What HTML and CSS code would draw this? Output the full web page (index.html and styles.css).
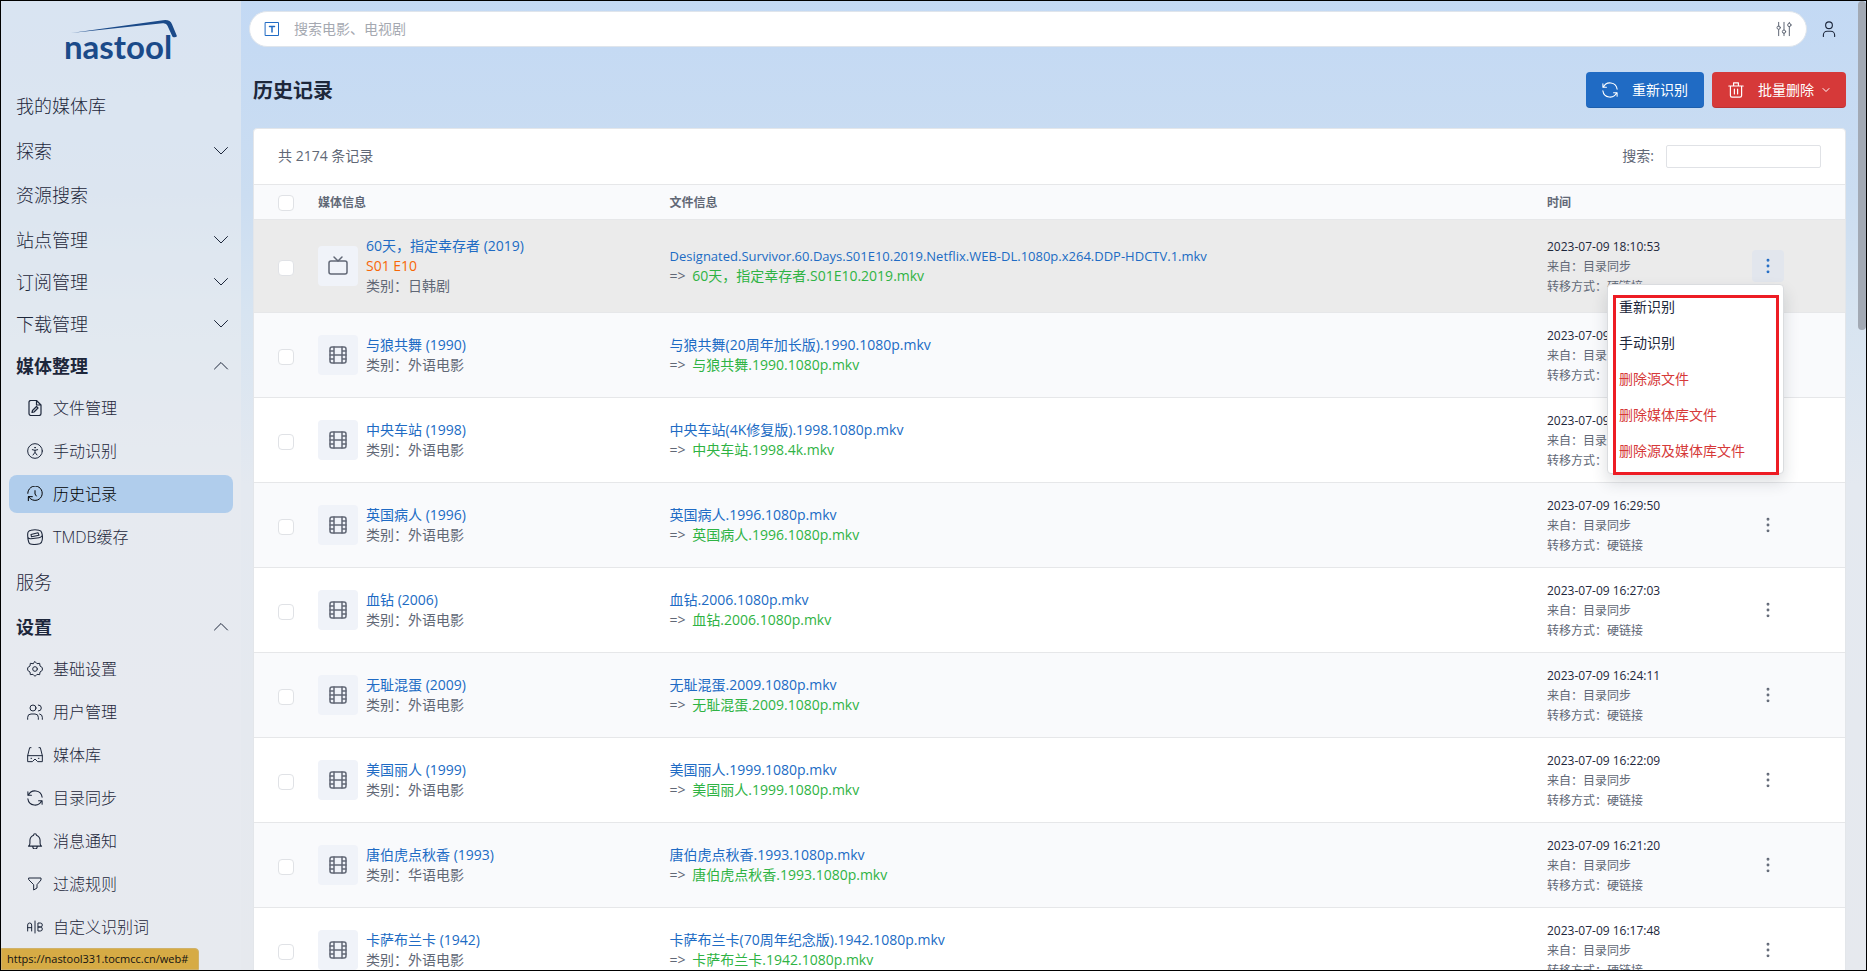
FILE: index.html
```html
<!DOCTYPE html>
<html lang="zh-CN">
<head>
<meta charset="utf-8">
<title>历史记录 - nastool</title>
<link rel="stylesheet" href="styles.css">
</head>
<body>
<svg class="defs" aria-hidden="true">
  <symbol id="down" viewBox="0 0 16 16"><path d="M1.5 4.5 8 11l6.500-6.500" stroke-width="1"/></symbol>
  <symbol id="up" viewBox="0 0 16 16"><path d="M1.500 11 8 4.500 14.500 11" stroke-width="1"/></symbol>
  <symbol id="film" viewBox="0 0 24 24"><rect x="4" y="4" width="16" height="16" rx="2"/><path d="M8 4v16M16 4v16M4 8h4M4 16h4M4 12h16M16 8h4M16 16h4"/></symbol>
  <symbol id="tv" viewBox="0 0 24 24"><rect x="3" y="7" width="18" height="13" rx="2"/><path d="m16 3-4 4-4-4"/></symbol>
  <symbol id="dots" viewBox="0 0 24 24"><circle cx="12" cy="12" r="1"/><circle cx="12" cy="19" r="1"/><circle cx="12" cy="5" r="1"/></symbol>
  <symbol id="refresh" viewBox="3 3 18 18"><path d="M20 11A8.100 8.100 0 0 0 4.500 9M4 5v4h4M4 13a8.100 8.100 0 0 0 15.500 2m.5 4v-4h-4" stroke-width="1.200"/></symbol>
</svg>
<div class="app">
  <aside class="sidebar">
    <a class="logo" href="#" aria-label="nastool">
      <svg viewBox="0 0 120 54" width="120" height="54"><path d="M6 15 98 2.200q7-1 9 4l5 12q-2 2-4.500.5l-5-11q-1-3-5-2.500Z" fill="#1b4a89"/><text x="-1" y="41">nastool</text></svg>
    </a>
    <nav>
      <a class="top" href="#">我的媒体库</a>
      <button class="group">探索<svg><use href="#down"/></svg></button>
      <a class="top" href="#">资源搜索</a>
      <button class="group">站点管理<svg><use href="#down"/></svg></button>
      <button class="group">订阅管理<svg><use href="#down"/></svg></button>
      <button class="group">下载管理<svg><use href="#down"/></svg></button>
      <button class="group open">媒体整理<svg><use href="#up"/></svg></button>
      <a class="sub" href="#"><svg viewBox="0 0 16 16"><path d="M9.500 1v4H14M14 5v8.500a2 2 0 0 1-2 2H4a2 2 0 0 1-2-2v-11a1.800 1.800 0 0 1 2-2h5.500ZM5 12.500l.5-2 4-4 1.500 1.500-4 4Z" stroke-width="1.200"/></svg>文件管理</a>
      <a class="sub" href="#"><svg viewBox="0 0 24 24"><circle cx="12" cy="12" r="11"/><path d="m8 10 4 1 4-1M12 11v3m-3 4 3-4 3 4"/><circle cx="12" cy="7" r=".6"/></svg>手动识别</a>
      <a class="sub active" href="#"><svg viewBox="0 0 24 24"><path d="M12 7v5l2 3M2.500 16A10.800 10.800 0 1 0 1.200 11M2 22v-6h6"/></svg>历史记录</a>
      <a class="sub" href="#"><svg viewBox="0 0 16 16"><path d="M.7 5.500Q.5 2 4 1.300q4-1 8 0 2.500.5 2.700 2.500 1.200 3 .5 7.200-.3 3-2.500 3.800-4 1-8 .5Q2 15 1.700 13 .5 9 .7 5.500ZM1 8.500q1 1.500 3 1.300l8-1q2-.2 3-2M4 5.500l7-1.700 1 2.500-7.500 1.500Z" stroke-width="1.100"/></svg>TMDB缓存</a>
      <a class="top" href="#">服务</a>
      <button class="group open">设置<svg><use href="#up"/></svg></button>
      <a class="sub" href="#"><svg viewBox="0 0 24 24"><path d="m12 1 3 3 4-.5.5 4L23 10v4l-3.500 2.500-.5 4-4-.5-3 3-3-3-4 .5-.5-4L1 14v-4l3.500-2.500.5-4 4 .5Z"/><circle cx="12" cy="12" r="3.500"/></svg>基础设置</a>
      <a class="sub" href="#"><svg viewBox="0 0 24 24"><circle cx="9" cy="6" r="4.500"/><path d="M1 23v-3a5 5 0 0 1 5-5h6a5 5 0 0 1 5 5v3M17 1.500a4.500 4.500 0 0 1 0 9M23 23v-3a5 5 0 0 0-4-5"/></svg>用户管理</a>
      <a class="sub" href="#"><svg viewBox="0 0 24 24"><path d="M6 1H4L1 13v9h7l4-4 4 4h7v-9L20 1h-2M1 13h22M6 17h1M17 17h1"/></svg>媒体库</a>
      <a class="sub" href="#"><svg><use href="#refresh"/></svg>目录同步</a>
      <a class="sub" href="#"><svg viewBox="2 1 20 22"><path d="M10 4a2 2 0 1 1 4 0 8 8 0 0 1 5 7v4a5 5 0 0 0 2 4H3a5 5 0 0 0 2-4v-4a8 8 0 0 1 5-7M9 19v1a3 3 0 0 0 6 0v-1"/></svg>消息通知</a>
      <a class="sub" href="#"><svg viewBox="0 0 24 24"><path d="M3 3h18v3l-6 7v5l-5 3v-8L3 6Z"/></svg>过滤规则</a>
      <a class="sub" href="#"><svg viewBox="0 0 24 24"><path d="M1 18V9q0-3 3-3t3 3v9M1 13h6M12 3v18M17 6h3q3 0 3 3t-3 3h-3zm0 6h3q3 0 3 3t-3 3h-3Z"/></svg>自定义识别词</a>
    </nav>
  </aside>
  <main class="main">
    <header class="bar">
      <div class="search">
        <svg class="type" viewBox="0 0 16 16"><rect x="1.500" y="1.500" width="13" height="13"/><path d="M5.500 5.500h5M8 5.500V11" stroke-width="1.500"/></svg>
        <input type="text" placeholder="搜索电影、电视剧" aria-label="搜索电影、电视剧">
        <button class="plain" aria-label="高级"><svg viewBox="0 0 24 24"><path d="M4 2v6M4 13v9M12 2v11M12 18v4M20 2v1M20 8v14"/><circle cx="4" cy="10" r="2.500"/><circle cx="12" cy="16" r="2.500"/><circle cx="20" cy="6" r="2.500"/></svg></button>
      </div>
      <button class="plain user" aria-label="用户"><svg viewBox="0 0 24 24"><circle cx="12" cy="7" r="4.500"/><path d="M4.500 22v-2a5 5 0 0 1 5-5h5a5 5 0 0 1 5 5v2"/></svg></button>
    </header>
    <div class="heading">
      <h1>历史记录</h1>
      <button class="btn blue"><svg><use href="#refresh"/></svg>重新识别</button>
      <button class="btn red"><svg viewBox="2 2 20 20"><path d="M3 7h18M10 11v6M14 11v6M5 7v12a2 2 0 0 0 2 2h10a2 2 0 0 0 2-2V7M9 7V3h6v4"/></svg>批量删除<svg class="caret" viewBox="0 0 8 8"><path d="M1 2.500 4 5.500l3-3"/></svg></button>
    </div>
    <section class="card">
      <div class="tools"><span>共 2174 条记录</span><label for="q">搜索:</label><input id="q" type="text"></div>
      <table>
        <colgroup><col class="c-check"><col class="c-media"><col><col class="c-time"><col class="c-act"></colgroup>
        <thead><tr><th><input type="checkbox" aria-label="全选"></th><th>媒体信息</th><th>文件信息</th><th>时间</th><th></th></tr></thead>
        <tbody>
          <tr class="hover">
            <td><input type="checkbox" aria-label="选择"></td>
            <td><div class="media"><span class="thumb"><svg><use href="#tv"/></svg></span><div><a href="#">60天，指定幸存者 (2019)</a><div class="ep">S01 E10</div><div>类别：日韩剧</div></div></div></td>
            <td><a class="long" href="#">Designated.Survivor.60.Days.S01E10.2019.Netflix.WEB-DL.1080p.x264.DDP-HDCTV.1.mkv</a><div>=&gt; <span class="dest">60天，指定幸存者.S01E10.2019.mkv</span></div></td>
            <td class="time"><time>2023-07-09 18:10:53</time><div>来自：目录同步</div><div>转移方式：硬链接</div></td>
            <td><div class="action"><button class="more on" aria-label="操作"><svg><use href="#dots"/></svg></button>
              <div class="menu"><button>重新识别</button><button>手动识别</button><button class="danger">删除源文件</button><button class="danger">删除媒体库文件</button><button class="danger">删除源及媒体库文件</button><span class="mark"></span></div></div></td>
          </tr>
          <tr>
            <td><input type="checkbox" aria-label="选择"></td>
            <td><div class="media"><span class="thumb"><svg><use href="#film"/></svg></span><div><a href="#">与狼共舞 (1990)</a><div>类别：外语电影</div></div></div></td>
            <td><a href="#">与狼共舞(20周年加长版).1990.1080p.mkv</a><div>=&gt; <span class="dest">与狼共舞.1990.1080p.mkv</span></div></td>
            <td class="time"><time>2023-07-09</time><div>来自：目录同步</div><div>转移方式：</div></td>
            <td><div class="action"><button class="more" aria-label="操作"><svg><use href="#dots"/></svg></button></div></td>
          </tr>
          <tr>
            <td><input type="checkbox" aria-label="选择"></td>
            <td><div class="media"><span class="thumb"><svg><use href="#film"/></svg></span><div><a href="#">中央车站 (1998)</a><div>类别：外语电影</div></div></div></td>
            <td><a href="#">中央车站(4K修复版).1998.1080p.mkv</a><div>=&gt; <span class="dest">中央车站.1998.4k.mkv</span></div></td>
            <td class="time"><time>2023-07-09</time><div>来自：目录同步</div><div>转移方式：</div></td>
            <td><div class="action"><button class="more" aria-label="操作"><svg><use href="#dots"/></svg></button></div></td>
          </tr>
          <tr>
            <td><input type="checkbox" aria-label="选择"></td>
            <td><div class="media"><span class="thumb"><svg><use href="#film"/></svg></span><div><a href="#">英国病人 (1996)</a><div>类别：外语电影</div></div></div></td>
            <td><a href="#">英国病人.1996.1080p.mkv</a><div>=&gt; <span class="dest">英国病人.1996.1080p.mkv</span></div></td>
            <td class="time"><time>2023-07-09 16:29:50</time><div>来自：目录同步</div><div>转移方式：硬链接</div></td>
            <td><div class="action"><button class="more" aria-label="操作"><svg><use href="#dots"/></svg></button></div></td>
          </tr>
          <tr>
            <td><input type="checkbox" aria-label="选择"></td>
            <td><div class="media"><span class="thumb"><svg><use href="#film"/></svg></span><div><a href="#">血钻 (2006)</a><div>类别：外语电影</div></div></div></td>
            <td><a href="#">血钻.2006.1080p.mkv</a><div>=&gt; <span class="dest">血钻.2006.1080p.mkv</span></div></td>
            <td class="time"><time>2023-07-09 16:27:03</time><div>来自：目录同步</div><div>转移方式：硬链接</div></td>
            <td><div class="action"><button class="more" aria-label="操作"><svg><use href="#dots"/></svg></button></div></td>
          </tr>
          <tr>
            <td><input type="checkbox" aria-label="选择"></td>
            <td><div class="media"><span class="thumb"><svg><use href="#film"/></svg></span><div><a href="#">无耻混蛋 (2009)</a><div>类别：外语电影</div></div></div></td>
            <td><a href="#">无耻混蛋.2009.1080p.mkv</a><div>=&gt; <span class="dest">无耻混蛋.2009.1080p.mkv</span></div></td>
            <td class="time"><time>2023-07-09 16:24:11</time><div>来自：目录同步</div><div>转移方式：硬链接</div></td>
            <td><div class="action"><button class="more" aria-label="操作"><svg><use href="#dots"/></svg></button></div></td>
          </tr>
          <tr>
            <td><input type="checkbox" aria-label="选择"></td>
            <td><div class="media"><span class="thumb"><svg><use href="#film"/></svg></span><div><a href="#">美国丽人 (1999)</a><div>类别：外语电影</div></div></div></td>
            <td><a href="#">美国丽人.1999.1080p.mkv</a><div>=&gt; <span class="dest">美国丽人.1999.1080p.mkv</span></div></td>
            <td class="time"><time>2023-07-09 16:22:09</time><div>来自：目录同步</div><div>转移方式：硬链接</div></td>
            <td><div class="action"><button class="more" aria-label="操作"><svg><use href="#dots"/></svg></button></div></td>
          </tr>
          <tr>
            <td><input type="checkbox" aria-label="选择"></td>
            <td><div class="media"><span class="thumb"><svg><use href="#film"/></svg></span><div><a href="#">唐伯虎点秋香 (1993)</a><div>类别：华语电影</div></div></div></td>
            <td><a href="#">唐伯虎点秋香.1993.1080p.mkv</a><div>=&gt; <span class="dest">唐伯虎点秋香.1993.1080p.mkv</span></div></td>
            <td class="time"><time>2023-07-09 16:21:20</time><div>来自：目录同步</div><div>转移方式：硬链接</div></td>
            <td><div class="action"><button class="more" aria-label="操作"><svg><use href="#dots"/></svg></button></div></td>
          </tr>
          <tr>
            <td><input type="checkbox" aria-label="选择"></td>
            <td><div class="media"><span class="thumb"><svg><use href="#film"/></svg></span><div><a href="#">卡萨布兰卡 (1942)</a><div>类别：外语电影</div></div></div></td>
            <td><a href="#">卡萨布兰卡(70周年纪念版).1942.1080p.mkv</a><div>=&gt; <span class="dest">卡萨布兰卡.1942.1080p.mkv</span></div></td>
            <td class="time"><time>2023-07-09 16:17:48</time><div>来自：目录同步</div><div>转移方式：硬链接</div></td>
            <td><div class="action"><button class="more" aria-label="操作"><svg><use href="#dots"/></svg></button></div></td>
          </tr>
        </tbody>
      </table>
    </section>
  </main>
  <div class="scroll"><div class="bar-thumb"></div></div>
  <div class="status">https://nastool331.tocmcc.cn/web#</div>
</div>
</body>
</html>
```
FILE: styles.css
```css
* { box-sizing: border-box; }
body {
  margin: 0;
  font: 14px/20px "Open Sans", "Noto Sans CJK SC", sans-serif;
  color: #616876;
}
button, input { font: inherit; color: inherit; }
button { border: 0; background: none; padding: 0; cursor: pointer; }
a { color: #206bc4; text-decoration: none; }
svg { fill: none; stroke: currentColor; stroke-width: 1.5; stroke-linecap: round; stroke-linejoin: round; flex: none; }
.defs { display: none; }
.app {
  position: relative;
  display: flex;
  height: 100vh;
  overflow: hidden;
  border: 1px solid #000;
  background: linear-gradient(#c3d9f4, #cbddf1 20%, #d7e4f1 32%, #e4e9f0 50%, #e6e9ee);
}

.sidebar { flex: none; width: 240px; background: rgba(231, 235, 240, .6); color: #1d273b; }
.logo { display: flex; height: 82px; padding: 17px 0 0 64px; }
.logo svg { stroke: none; overflow: visible; }
.logo text { font: bold 33px Lato, sans-serif; fill: #1b4a89; }
nav { display: flex; flex-direction: column; }
.top, .group { display: flex; align-items: center; padding: 0 15px; font-size: 18px; font-weight: 300; color: #1d273b; }
.top { height: 47px; padding-bottom: 2px; }
.group { height: 42px; justify-content: space-between; text-align: left; padding-right: 12px; }
.group svg { width: 16px; height: 16px; }
.open { font-weight: 700; }
.sub { display: flex; align-items: center; gap: 10px; height: 38px; margin: 2px 8px 3px; padding-left: 18px; border-radius: 8px; font-size: 16px; font-weight: 300; color: #1d273b; }
.sub svg { width: 16px; height: 16px; }
.active { background: #b0cdec; color: #000; }

.main { flex: 1; min-width: 0; padding: 10px 12px 0; }
.bar { display: flex; align-items: center; margin-left: -4px; }
.search { flex: 1; display: flex; align-items: center; gap: 14px; height: 36px; padding: 0 14px; border: 1px solid #dfe5ec; border-radius: 18px; background: #fff; }
.search input { flex: 1; border: 0; outline: 0; padding: 0; background: none; }
.search input::placeholder { color: #a5a9b1; opacity: 1; }
.type { width: 16px; height: 16px; color: #206bc4; stroke-width: 1; }
.plain svg { display: block; width: 16px; height: 16px; }
.search .plain { color: #616876; }
.user { margin: 0 8px 0 13px; color: #1d273b; }
.user svg { width: 18px; height: 18px; }
.heading { display: flex; align-items: center; gap: 8px; margin-top: 25px; }
h1 { flex: 1; margin: 0; padding-top: 2px; font-size: 20px; line-height: 28px; color: #1d273b; }
.btn { display: flex; align-items: center; height: 36px; padding: 0 16px; border-radius: 4px; color: #fff; box-shadow: inset 0 -1px 0 rgba(0, 0, 0, .12); }
.btn svg { width: 16px; height: 16px; margin-right: 14px; }
.btn .caret { width: 8px; height: 8px; margin: 0 0 0 8px; stroke-width: 1; }
.blue { background: #206bc4; }
.red { background: #d63939; }

.card { margin-top: 20px; border: 1px solid #e3e6ea; border-radius: 4px; background: #fff; }
.tools { display: flex; align-items: center; height: 55px; padding: 0 24px; }
.tools span { flex: 1; padding-bottom: 2px; }
.tools label { padding-bottom: 1px; }
.tools input { width: 155px; height: 23px; margin-left: 12px; border: 1px solid #e0e2e6; border-radius: 2px; }
table { width: 100%; table-layout: fixed; border-collapse: collapse; }
.c-check { width: 56px; }
.c-media { width: 22.1%; }
.c-time { width: 205px; }
.c-act { width: 101px; }
th, td { padding: 12px 8px; text-align: left; vertical-align: middle; border-top: 1px solid #e6e7e9; }
th { padding: 8px 8px 6px; background: #f9fafc; font-size: 12px; font-weight: 700; }
th:first-child, td:first-child { padding-left: 24px; }
tbody tr:nth-child(even) { background: #f9fafc; }
tbody tr.hover { background: #ebebeb; }
tbody tr.hover td { padding-top: 16px; padding-bottom: 16px; }
input[type="checkbox"] { appearance: none; display: block; width: 16px; height: 16px; margin: 0; border: 1px solid #e0e2e6; border-radius: 4px; background: #fff; }
td input[type="checkbox"] { margin-top: 3px; }
td a { display: block; }
.long { font-size: 13px; }
.media { display: flex; align-items: center; gap: 8px; }
.thumb { display: flex; align-items: center; justify-content: center; width: 40px; height: 40px; border-radius: 4px; background: #f0f3f9; }
.thumb svg { width: 24px; height: 24px; }
.ep { color: #f76707; }
.dest { margin-left: 3px; color: #2fb344; }
td.time { padding-top: 13px; padding-bottom: 11px; font-size: 12px; }
tbody tr.hover td.time { padding-top: 17px; padding-bottom: 15px; }
time { color: #1d273b; }
.action { position: relative; width: 32px; }
.more { display: flex; align-items: center; justify-content: center; width: 32px; height: 32px; border-radius: 4px; }
.more svg { width: 20px; height: 20px; }
.on { background: #e2e6ed; color: #206bc4; }
.menu { position: absolute; z-index: 2; top: 34px; right: 0; width: 177px; padding: 4px 0; border: 1px solid #dadcdf; border-radius: 4px; background: #fff; box-shadow: 0 8px 16px rgba(30, 41, 59, .16); }
.menu button { display: block; width: 100%; height: 36px; padding: 0 11px; text-align: left; color: #1d273b; }
.menu .danger { color: #d63939; }
.mark { position: absolute; top: 10px; right: 4px; bottom: -2px; left: 5px; border: 3px solid #ed1c24; pointer-events: none; }

.scroll { flex: none; width: 8px; }
.bar-thumb { height: 34%; border-radius: 4px; background: #a2a9b4; }
.status { position: absolute; left: 0; bottom: 0; padding: 0 10px 0 5px; border: 1px solid #d0b26a; border-radius: 0 4px 0 0; background: #d6ab45; color: #111; font-size: 11px; }
```
